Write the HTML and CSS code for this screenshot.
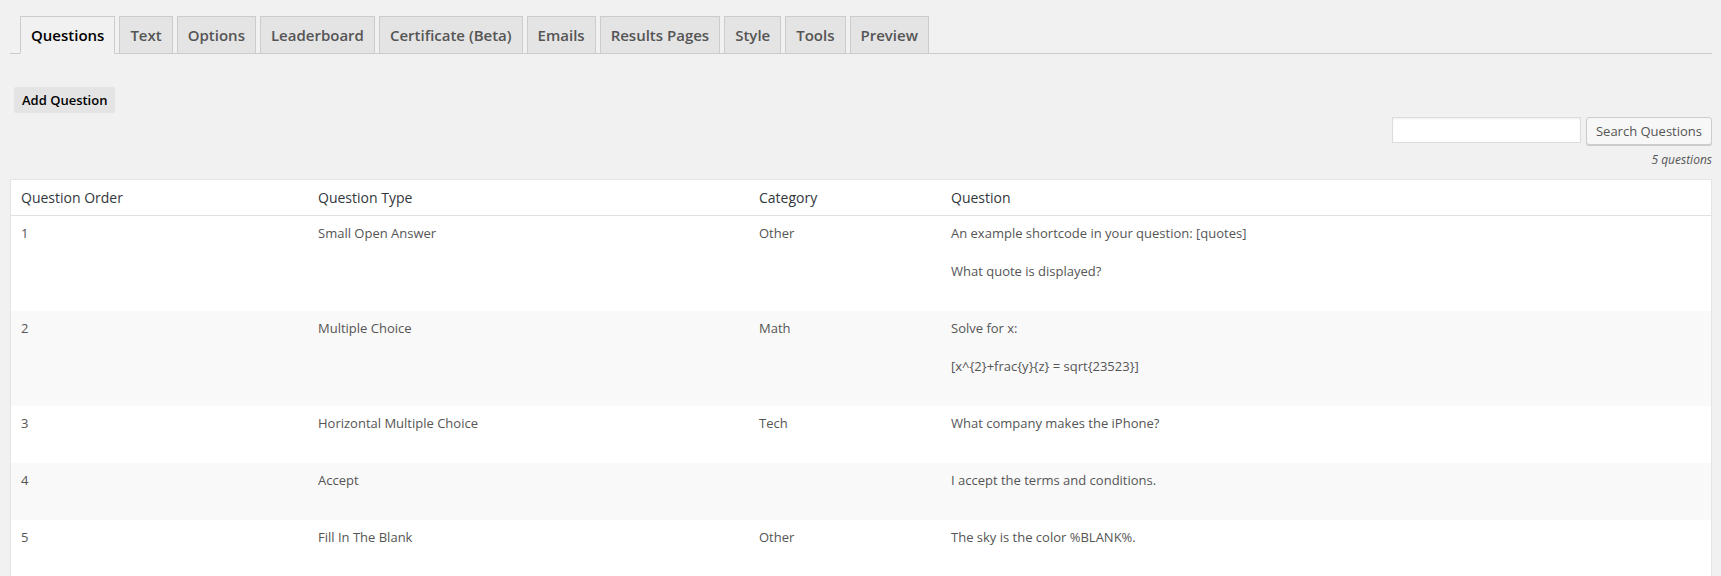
FILE: index.html
```html
<!DOCTYPE html>
<html lang="en">
<head>
<meta charset="utf-8">
<title>Questions</title>
<link rel="stylesheet" href="styles.css">
</head>
<body>
<div class="wrap">
  <nav class="nav-tabs">
    <a class="nav-tab active" href="#">Questions</a>
    <a class="nav-tab" href="#">Text</a>
    <a class="nav-tab" href="#">Options</a>
    <a class="nav-tab" href="#">Leaderboard</a>
    <a class="nav-tab" href="#">Certificate (Beta)</a>
    <a class="nav-tab" href="#">Emails</a>
    <a class="nav-tab" href="#">Results Pages</a>
    <a class="nav-tab" href="#">Style</a>
    <a class="nav-tab" href="#">Tools</a>
    <a class="nav-tab" href="#">Preview</a>
  </nav>

  <div class="actions">
    <button class="add-btn" type="button">Add Question</button>
  </div>

  <form class="search-row">
    <input class="search-input" type="search" aria-label="Search Questions">
    <button class="search-btn" type="button">Search Questions</button>
  </form>

  <div class="displaying-num">5 questions</div>

  <table class="questions">
    <thead>
      <tr>
        <th class="col-order">Question Order</th>
        <th class="col-type">Question Type</th>
        <th class="col-cat">Category</th>
        <th class="col-q">Question</th>
      </tr>
    </thead>
    <tbody>
      <tr>
        <td>1</td>
        <td>Small Open Answer</td>
        <td>Other</td>
        <td>An example shortcode in your question: [quotes]<br><br>What quote is displayed?<div class="row-actions"></div></td>
      </tr>
      <tr>
        <td>2</td>
        <td>Multiple Choice</td>
        <td>Math</td>
        <td>Solve for x:<br><br>[x^{2}+frac{y}{z} = sqrt{23523}]<div class="row-actions"></div></td>
      </tr>
      <tr>
        <td>3</td>
        <td>Horizontal Multiple Choice</td>
        <td>Tech</td>
        <td>What company makes the iPhone?<div class="row-actions"></div></td>
      </tr>
      <tr>
        <td>4</td>
        <td>Accept</td>
        <td></td>
        <td>I accept the terms and conditions.<div class="row-actions"></div></td>
      </tr>
      <tr>
        <td>5</td>
        <td>Fill In The Blank</td>
        <td>Other</td>
        <td>The sky is the color %BLANK%.<div class="row-actions"></div></td>
      </tr>
    </tbody>
  </table>
</div>
</body>
</html>
```

FILE: styles.css
```css
html, body {
  margin: 0;
  padding: 0;
  background: #f1f1f1;
}

body {
  font-family: "Open Sans", "Noto Sans", sans-serif;
  font-size: 13px;
  color: #444;
}

.wrap {
  padding: 0 9px 0 10px;
}

/* Tabs */
.nav-tabs {
  display: flex;
  gap: 4px;
  margin-top: 16px;
  padding-left: 10px;
  border-bottom: 1px solid #ccc;
}

.nav-tab {
  display: block;
  margin-bottom: -1px;
  padding: 6px 10px;
  font-size: 15px;
  line-height: 24px;
  font-weight: 600;
  color: #555;
  background: #e4e4e4;
  border: 1px solid #ccc;
  text-decoration: none;
  white-space: nowrap;
}

.nav-tab.active {
  color: #000;
  background: #f1f1f1;
  border-bottom-color: #f1f1f1;
}

/* Add question */
.actions {
  margin-top: 33px;
  padding-left: 4px;
}

.add-btn {
  display: inline-block;
  height: 26px;
  padding: 0 8px;
  margin: 0;
  border: 0;
  border-radius: 2px;
  background: #e4e4e4;
  color: #000;
  font-family: inherit;
  font-size: 13px;
  font-weight: 600;
  line-height: 26px;
}

/* Search */
.search-row {
  display: flex;
  justify-content: flex-end;
  align-items: flex-start;
  gap: 5px;
  margin: 4px 0 0;
}

.search-input {
  box-sizing: border-box;
  width: 189px;
  height: 26px;
  margin: 0;
  padding: 3px 5px;
  border: 1px solid #ddd;
  background: #fff;
  box-shadow: inset 0 1px 2px rgba(0, 0, 0, 0.07);
  font-family: inherit;
  font-size: 13px;
  outline: none;
}

.search-btn {
  box-sizing: border-box;
  height: 28px;
  margin: 0;
  padding: 0 9px 1px;
  border: 1px solid #ccc;
  border-radius: 3px;
  background: #f7f7f7;
  box-shadow: 0 1px 0 #ccc;
  color: #555;
  font-family: inherit;
  font-size: 13px;
  line-height: 26px;
  white-space: nowrap;
}

.displaying-num {
  margin-top: 5px;
  text-align: right;
  font-style: italic;
  font-size: 12px;
  line-height: 19px;
  color: #555;
}

/* Table */
.questions {
  width: 100%;
  margin-top: 10px;
  border: 1px solid #e5e5e5;
  border-spacing: 0;
  background: #fff;
  box-shadow: 0 1px 1px rgba(0, 0, 0, 0.04);
  table-layout: fixed;
}

.questions th {
  padding: 8px 10px;
  text-align: left;
  font-weight: 400;
  font-size: 14px;
  line-height: 19px;
  color: #32373c;
  border-bottom: 1px solid #e1e1e1;
}

.col-order { width: 277px; }
.col-type  { width: 421px; }
.col-cat   { width: 172px; }

.questions td {
  padding: 8px 10px;
  vertical-align: top;
  font-size: 13px;
  line-height: 19px;
  color: #555;
}

.questions tbody tr:nth-child(even) td {
  background: #f9f9f9;
}

.row-actions {
  height: 22px;
}
```
